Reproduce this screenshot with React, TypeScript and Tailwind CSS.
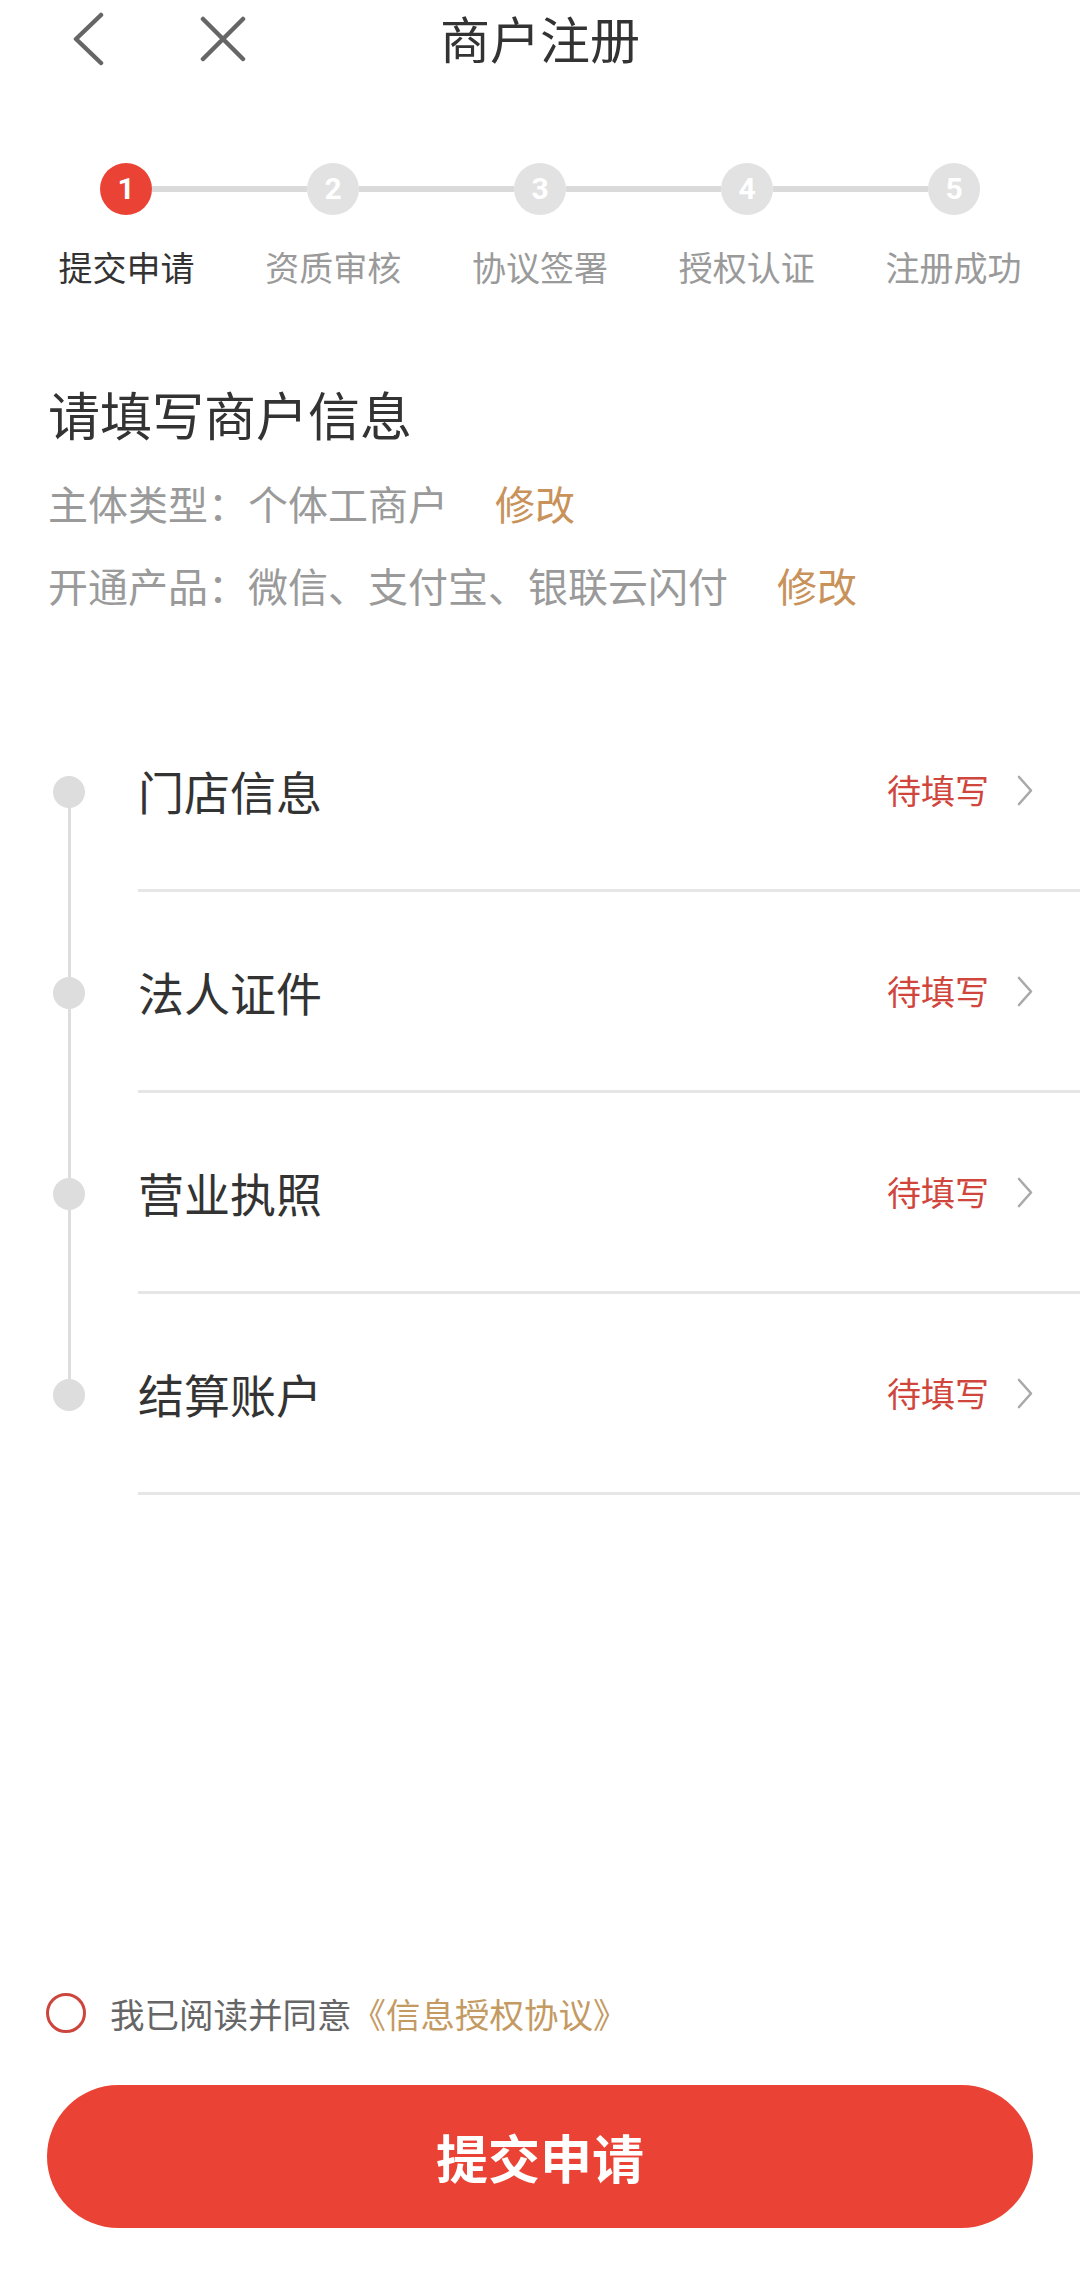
import React from "react";

const steps = ["提交申请", "资质审核", "协议签署", "授权认证", "注册成功"];
const items = ["门店信息", "法人证件", "营业执照", "结算账户"];

function Chevron({ className }: { className?: string }) {
  return (
    <svg viewBox="0 0 16 31" className={className} fill="none">
      <path d="M2 2 L14 15.5 L2 29" stroke="#a9a9a9" strokeWidth="2.6" strokeLinecap="round" strokeLinejoin="round" />
    </svg>
  );
}

export default function App() {
  const font = { fontFamily: '"Noto Sans CJK SC", "Noto Sans", sans-serif' };
  return (
    <div className="min-h-screen w-[1080px] bg-white flex flex-col" style={font}>
      {/* Header */}
      <div className="h-[74px] grid grid-cols-[1fr_auto_1fr] items-center">
        <div className="flex items-center pl-[72px] gap-[96px] mt-[4px]">
          <svg viewBox="0 0 32 54" className="w-[32px] h-[54px]" fill="none">
            <path d="M29 3 L4 27 L29 51" stroke="#666666" strokeWidth="4.5" strokeLinecap="round" strokeLinejoin="round" />
          </svg>
          <svg viewBox="0 0 46 46" className="w-[46px] h-[46px]" fill="none">
            <path d="M3 3 L43 43 M43 3 L3 43" stroke="#666666" strokeWidth="4.5" strokeLinecap="round" />
          </svg>
        </div>
        <div className="text-[50px] leading-none text-[#333333]">商户注册</div>
        <div />
      </div>

      {/* Stepper */}
      <div className="mt-[89px] px-[100px] flex items-center">
        {steps.map((s, i) => (
          <React.Fragment key={s}>
            {i > 0 && <div className="flex-1 h-[6px] bg-[#dadada]" />}
            <div
              className={`w-[52px] h-[52px] rounded-full flex items-center justify-center text-white text-[30px] font-bold leading-none ${
                i === 0 ? "bg-[#ea4335]" : "bg-[#e2e2e2]"
              }`}
              style={{ fontFamily: '"Roboto", "Liberation Sans", sans-serif' }}
            >
              {i + 1}
            </div>
          </React.Fragment>
        ))}
      </div>
      <div className="mt-[35px] px-[23px] grid grid-cols-5">
        {steps.map((s, i) => (
          <div
            key={s}
            className={`text-center text-[34px] leading-[34px] ${i === 0 ? "text-[#333333]" : "text-[#9a9a9a]"}`}
          >
            {s}
          </div>
        ))}
      </div>

      {/* Info */}
      <div className="mt-[104px] pl-[48px]">
        <div className="text-[52px] leading-[52px] text-[#333333]">请填写商户信息</div>
        <div className="mt-[43px] flex items-center text-[40px] leading-[40px]">
          <span className="text-[#9a9a9a]">主体类型：个体工商户</span>
          <span className="ml-[47px] text-[#c8925a]">修改</span>
        </div>
        <div className="mt-[42px] flex items-center text-[40px] leading-[40px]">
          <span className="text-[#9a9a9a]">开通产品：微信、支付宝、银联云闪付</span>
          <span className="ml-[49px] text-[#c8925a]">修改</span>
        </div>
      </div>

      {/* Items */}
      <div className="mt-[86px] flex flex-col">
        {items.map((t, i) => (
          <div key={t} className="flex h-[201px]">
            <div className="w-[138px] flex flex-col items-center">
              <div className={`flex-1 w-[3px] ${i === 0 ? "bg-transparent" : "bg-[#dddddd]"}`} />
              <div className="w-[32px] h-[32px] rounded-full bg-[#dddddd]" />
              <div className={`flex-1 w-[3px] ${i === items.length - 1 ? "bg-transparent" : "bg-[#dddddd]"}`} />
            </div>
            <div className="flex-1 flex items-center border-b-[3px] border-[#e6e6e6] pr-[47px]">
              <div className="flex-1 text-[46px] leading-[46px] text-[#333333]">{t}</div>
              <div className="text-[34px] leading-[34px] text-[#d0463c]">待填写</div>
              <Chevron className="ml-[28px] w-[16px] h-[31px]" />
            </div>
          </div>
        ))}
      </div>

      <div className="flex-1" />

      {/* Footer */}
      <div className="flex items-center pl-[46px] h-[40px]">
        <div className="w-[40px] h-[40px] rounded-full border-[3px] border-[#cc463d]" />
        <div className="ml-[24px] text-[34.5px] leading-[34px]">
          <span className="text-[#666666]">我已阅读并同意</span>
          <span className="text-[#c49a63]">《信息授权协议》</span>
        </div>
      </div>
      <div className="mt-[52px] mb-[41px] mx-[47px] h-[143px] rounded-full bg-[#ea4335] flex items-center justify-center">
        <span className="text-white text-[52px] font-bold leading-none">提交申请</span>
      </div>
    </div>
  );
}
